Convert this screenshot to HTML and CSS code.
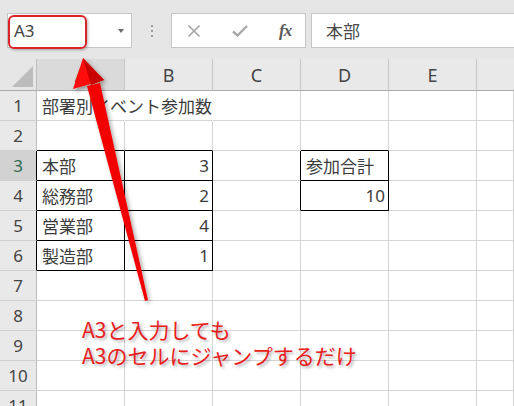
FILE: index.html
```html
<!DOCTYPE html>
<html lang="ja">
<head>
<meta charset="utf-8">
<title>Excel Name Box</title>
<link rel="stylesheet" href="styles.css">
</head>
<body>
<div class="app">
  <div class="toolbar">
    <div class="namebox">
      <span class="nb-text">A3</span>
      <span class="nb-arrow"></span>
      <div class="highlight"></div>
    </div>
    <div class="grip"><i></i><i></i><i></i></div>
    <div class="fbtns">
      <svg class="ico-x" width="14" height="14" viewBox="0 0 14 14"><path d="M1.5 1.5 L12.5 12.5 M12.5 1.5 L1.5 12.5" stroke="#a3a3a3" stroke-width="1.6" fill="none"/></svg>
      <svg class="ico-check" width="16" height="12" viewBox="0 0 16 12"><path d="M1 6.5 L5.5 10.5 L15 1" stroke="#a8a8a8" stroke-width="2.4" fill="none"/></svg>
      <span class="fx">fx</span>
    </div>
    <div class="finput">本部</div>
  </div>

  <div class="sheet">
    <div class="corner"><span class="tri"></span></div>
    <div class="colhead sel">A</div>
    <div class="colhead">B</div>
    <div class="colhead">C</div>
    <div class="colhead">D</div>
    <div class="colhead">E</div>
    <div class="colhead last"></div>

    <div class="rowhead">1</div>
    <div class="cell nr title">部署別イベント参加数</div>
    <div class="cell nr"></div>
    <div class="cell"></div>
    <div class="cell"></div>
    <div class="cell"></div>
    <div class="cell"></div>

    <div class="rowhead">2</div>
    <div class="cell bb"></div>
    <div class="cell bb"></div>
    <div class="cell"></div>
    <div class="cell bb"></div>
    <div class="cell"></div>
    <div class="cell"></div>

    <div class="rowhead sel br">3</div>
    <div class="cell br bb">本部</div>
    <div class="cell br bb num">3</div>
    <div class="cell br"></div>
    <div class="cell br bb">参加合計</div>
    <div class="cell"></div>
    <div class="cell"></div>

    <div class="rowhead br">4</div>
    <div class="cell br bb">総務部</div>
    <div class="cell br bb num">2</div>
    <div class="cell br"></div>
    <div class="cell br bb num">10</div>
    <div class="cell"></div>
    <div class="cell"></div>

    <div class="rowhead br">5</div>
    <div class="cell br bb">営業部</div>
    <div class="cell br bb num">4</div>
    <div class="cell"></div>
    <div class="cell"></div>
    <div class="cell"></div>
    <div class="cell"></div>

    <div class="rowhead br">6</div>
    <div class="cell br bb">製造部</div>
    <div class="cell br bb num">1</div>
    <div class="cell"></div>
    <div class="cell"></div>
    <div class="cell"></div>
    <div class="cell"></div>

    <div class="rowhead">7</div>
    <div class="cell"></div><div class="cell"></div><div class="cell"></div><div class="cell"></div><div class="cell"></div><div class="cell"></div>
    <div class="rowhead">8</div>
    <div class="cell"></div><div class="cell"></div><div class="cell"></div><div class="cell"></div><div class="cell"></div><div class="cell"></div>
    <div class="rowhead">9</div>
    <div class="cell"></div><div class="cell"></div><div class="cell"></div><div class="cell"></div><div class="cell"></div><div class="cell"></div>
    <div class="rowhead">10</div>
    <div class="cell"></div><div class="cell"></div><div class="cell"></div><div class="cell"></div><div class="cell"></div><div class="cell"></div>
    <div class="rowhead">11</div>
    <div class="cell"></div><div class="cell"></div><div class="cell"></div><div class="cell"></div><div class="cell"></div><div class="cell"></div>
  </div>

  <svg class="arrow" width="514" height="406" viewBox="0 0 514 406">
    <defs>
      <filter id="sh" x="-50%" y="-20%" width="200%" height="140%">
        <feDropShadow dx="2" dy="2" stdDeviation="2" flood-color="#000" flood-opacity="0.35"/>
      </filter>
    </defs>
    <g filter="url(#sh)">
      <polygon points="87,86 100,83 148,300 145,301" fill="#f20000"/>
      <polygon points="83,58 73,89 104,80" fill="#ff0a0a"/>
      <polygon points="83,58 91,85 104,80" fill="#c80000"/>
    </g>
  </svg>

  <div class="note">A3と入力しても<br>A3のセルにジャンプするだけ</div>
</div>
</body>
</html>
```

FILE: styles.css
```css
html, body {
  margin: 0;
  padding: 0;
}
body {
  width: 514px;
  height: 406px;
  overflow: hidden;
  background: #e6e6e6;
  font-family: "Noto Sans CJK JP", "Noto Sans", sans-serif;
  color: #333;
}
.app {
  position: relative;
  width: 514px;
  height: 406px;
  overflow: hidden;
}

/* ---------- toolbar ---------- */
.toolbar {
  height: 59px;
  box-sizing: border-box;
  padding: 13px 0 0 7px;
  display: flex;
  align-items: flex-start;
  background: #e6e6e6;
}
.namebox, .fbtns, .finput {
  height: 35px;
  box-sizing: border-box;
  background: #fff;
  border: 1px solid #c6c6c6;
}
.namebox {
  position: relative;
  width: 125px;
  display: flex;
  align-items: center;
}
.nb-text {
  font-family: "Noto Sans", sans-serif;
  font-size: 17px;
  color: #444;
  padding-left: 6px;
  flex: 1;
}
.nb-arrow {
  width: 0;
  height: 0;
  border-left: 3.5px solid transparent;
  border-right: 3.5px solid transparent;
  border-top: 4px solid #6a6a6a;
  margin-right: 7px;
}
.highlight {
  position: absolute;
  left: 0;
  top: 1px;
  width: 79px;
  height: 34px;
  box-sizing: border-box;
  border: 2px solid #d92428;
  border-radius: 6px;
  box-shadow: 1px 1px 3px rgba(0, 0, 0, 0.3);
}
.grip {
  width: 39px;
  height: 35px;
  display: flex;
  flex-direction: column;
  align-items: center;
  justify-content: center;
  gap: 3px;
}
.grip i {
  display: block;
  width: 2px;
  height: 2px;
  background: #9c9c9c;
}
.fbtns {
  width: 135px;
  margin-right: 5px;
  display: flex;
  align-items: center;
  padding-left: 15px;
}
.ico-x { margin-right: 31px; }
.ico-check { margin-right: 31px; }
.fx {
  font-family: "Liberation Serif", serif;
  font-style: italic;
  font-weight: bold;
  font-size: 17px;
  color: #5a5a5a;
  letter-spacing: -1px;
}
.finput {
  flex: 1;
  border-right: none;
  display: flex;
  align-items: center;
  padding-left: 14px;
  font-size: 17px;
  color: #4a4a4a;
}

/* ---------- sheet ---------- */
.sheet {
  display: grid;
  grid-template-columns: 37px repeat(5, 88px) 1fr;
  grid-template-rows: 32px repeat(11, 30px);
  background: #fff;
}
.sheet > div {
  box-sizing: border-box;
  border-right: 1px solid #d4d4d4;
  border-bottom: 1px solid #d4d4d4;
}
.corner {
  position: relative;
  background: #e6e6e6;
  border-right-color: #bdbdbd !important;
  border-bottom-color: #ababab !important;
}
.tri {
  position: absolute;
  right: 3px;
  bottom: 3px;
  width: 0;
  height: 0;
  border-left: 21px solid transparent;
  border-bottom: 21px solid #bcbcbc;
}
.colhead {
  background: #e9e9e9;
  border-right-color: #c8c8c8 !important;
  border-bottom-color: #ababab !important;
  display: flex;
  align-items: center;
  justify-content: center;
  font-family: "Noto Sans", sans-serif;
  font-size: 18px;
  color: #444;
}
.colhead.sel { background: #dadada; }
.colhead.last { border-right: none !important; }
.rowhead {
  background: #e9e9e9;
  border-right-color: #bdbdbd !important;
  border-bottom-color: #d0d0d0 !important;
  display: flex;
  align-items: center;
  justify-content: center;
  font-family: "Noto Sans", sans-serif;
  font-size: 17px;
  color: #444;
}
.rowhead.sel {
  background: #d2d2d2;
  color: #2d6b4f;
}
.rowhead.br { border-right-color: #000 !important; }
.cell {
  display: flex;
  align-items: center;
  padding: 0 3px 0 5px;
  font-size: 17px;
  color: #3c3c3c;
  white-space: nowrap;
}
.cell.num {
  justify-content: flex-end;
  font-family: "Noto Sans", sans-serif;
}
.cell.nr { border-right-color: transparent !important; }
.cell.br { border-right-color: #000 !important; }
.cell.bb { border-bottom-color: #000 !important; }
.title { overflow: visible; }

/* ---------- overlay ---------- */
.arrow {
  position: absolute;
  left: 0;
  top: 0;
  pointer-events: none;
}
.note {
  position: absolute;
  left: 82px;
  top: 316px;
  font-size: 21px;
  line-height: 26px;
  color: #e8201c;
  white-space: nowrap;
  text-shadow: 2px 2px 3px rgba(0, 0, 0, 0.3);
}
```
